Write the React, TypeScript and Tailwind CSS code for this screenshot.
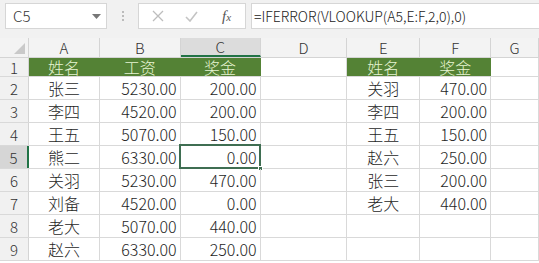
const cols = [
  { key: "A", w: "w-[71px]" },
  { key: "B", w: "w-[81px]" },
  { key: "C", w: "w-[80px]" },
  { key: "D", w: "w-[87px]" },
  { key: "E", w: "w-[73px]" },
  { key: "F", w: "w-[71px]" },
  { key: "G", w: "w-[48px]" },
]

type Cell = { v?: string; align?: "c" | "r"; head?: boolean }

const left = [
  ["张三", "5230.00", "200.00"],
  ["李四", "4520.00", "200.00"],
  ["王五", "5070.00", "150.00"],
  ["熊二", "6330.00", "0.00"],
  ["关羽", "5230.00", "470.00"],
  ["刘备", "4520.00", "0.00"],
  ["老大", "5070.00", "440.00"],
  ["赵六", "6330.00", "250.00"],
]

const right = [
  ["关羽", "470.00"],
  ["李四", "200.00"],
  ["王五", "150.00"],
  ["赵六", "250.00"],
  ["张三", "200.00"],
  ["老大", "440.00"],
]

const buildRows = (): Cell[][] => {
  const rows: Cell[][] = []
  rows.push([
    { v: "姓名", align: "c", head: true },
    { v: "工资", align: "c", head: true },
    { v: "奖金", align: "c", head: true },
    {},
    { v: "姓名", align: "c", head: true },
    { v: "奖金", align: "c", head: true },
    {},
  ])
  left.forEach((r, i) => {
    const rr = right[i]
    rows.push([
      { v: r[0], align: "c" },
      { v: r[1], align: "r" },
      { v: r[2], align: "r" },
      {},
      rr ? { v: rr[0], align: "c" } : {},
      rr ? { v: rr[1], align: "r" } : {},
      {},
    ])
  })
  return rows
}

const FormulaBar = () => (
  <div className="flex h-[38px] items-start bg-[#f1f1f1] pt-[3px] pl-[5px]">
    <div className="flex h-[26px] w-[102px] items-center justify-between border border-[#d6d6d6] bg-white pl-[7px] pr-[5px] text-[15px] font-light text-[#333]">
      <span>C5</span>
      <svg width="9" height="5" viewBox="0 0 9 5"><path d="M0 0h9L4.5 5z" fill="#777" /></svg>
    </div>
    <div className="flex h-[26px] w-[31px] flex-col items-center justify-center gap-[2px]">
      {[0, 1, 2].map(i => <span key={i} className="h-[2px] w-[2px] bg-[#bbb]" />)}
    </div>
    <div className="flex h-[26px] w-[108px] items-center border border-[#d6d6d6] bg-white">
      <svg className="ml-[13px]" width="12" height="12" viewBox="0 0 12 12"><path d="M1 1l10 10M11 1L1 11" stroke="#bdbdbd" strokeWidth="1.3" /></svg>
      <svg className="ml-[21px]" width="13" height="11" viewBox="0 0 13 11"><path d="M1 6l4 4 7-9" stroke="#c4c4c4" strokeWidth="1.6" fill="none" /></svg>
      <span className="ml-[24px] font-['Liberation_Serif',serif] text-[15px] italic text-[#555]">f<span className="text-[11px]">x</span></span>
    </div>
    <div className="ml-[5px] flex h-[26px] flex-1 items-center border border-r-0 border-[#d6d6d6] bg-white pl-[2px] text-[14px] font-light text-[#222]">
      =IFERROR(VLOOKUP(A5,E:F,2,0),0)
    </div>
  </div>
)

export default function App() {
  const rows = buildRows()
  return (
    <div className="h-[263px] w-[539px] overflow-hidden bg-white font-['Noto_Sans_CJK_SC','Noto_Sans',sans-serif]">
      <FormulaBar />
      <div className="flex h-[20px] border-b border-[#d4d4d4] bg-[#f3f3f3] text-[15px] font-light text-[#333]">
        <div className="relative w-[29px] border-r border-[#d4d4d4]">
          <svg className="absolute right-[3px] bottom-[3px]" width="11" height="11" viewBox="0 0 11 11"><path d="M11 0v11H0z" fill="#c9c9c9" /></svg>
        </div>
        {cols.map(c => (
          <div
            key={c.key}
            className={`${c.w} flex items-center justify-center border-r border-[#d4d4d4] leading-none ${c.key === "C" ? "border-b-2 border-b-[#217346] bg-[#dcdcdc]" : ""}`}
          >
            {c.key}
          </div>
        ))}
      </div>
      {rows.map((row, ri) => (
        <div key={ri} className={`flex ${ri === 0 ? "h-[19px]" : "h-[23px]"} border-b border-[#d9d9d9]`}>
          <div
            className={`flex w-[29px] items-center justify-center border-r text-[15px] leading-none font-light text-[#333] ${ri === 4 ? "border-r-2 border-r-[#217346] bg-[#d6d6d6]" : "border-[#d4d4d4] bg-[#f1f1f1]"}`}
          >
            {ri + 1}
          </div>
          {row.map((cell, ci) => {
            const sel = ri === 4 && ci === 2
            return (
              <div
                key={ci}
                className={`${cols[ci].w} relative flex items-center border-r text-[16px] leading-none font-light ${cell.head ? "border-[#548235] bg-[#548235] text-[#e6f4d2]" : "border-[#d9d9d9] text-[#1e1e1e]"} ${cell.align === "c" ? "justify-center" : "justify-end pr-[3px]"}`}
              >
                {cell.v}
                {sel && (
                  <>
                    <div className="absolute -top-[2px] -left-[2px] h-[25px] w-[82px] border-2 border-[#3f6e52]" />
                    <div className="absolute -right-[3px] -bottom-[3px] h-[5px] w-[5px] border border-white bg-[#3f6e52]" />
                  </>
                )}
              </div>
            )
          })}
        </div>
      ))}
    </div>
  )
}
